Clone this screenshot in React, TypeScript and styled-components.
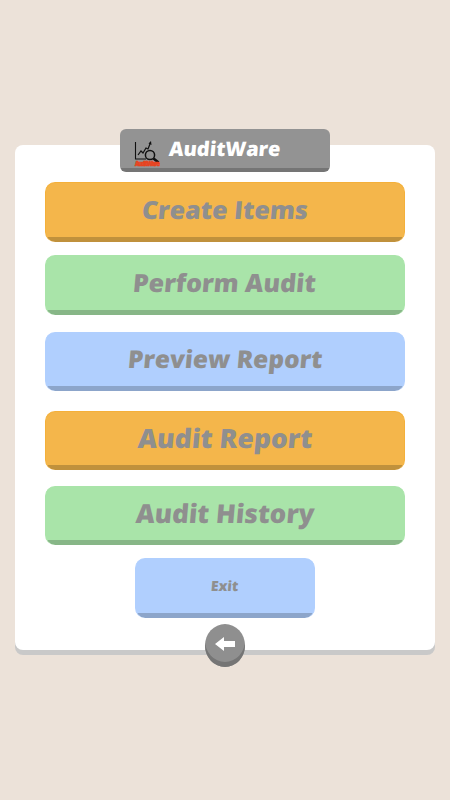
import styled, { createGlobalStyle } from "styled-components";

const GlobalStyle = createGlobalStyle`
  html, body {
    margin: 0;
    padding: 0;
    background: #ece2d9;
    font-family: "Open Sans", "Noto Sans", sans-serif;
  }
`;

const Page = styled.div`
  width: 450px;
  height: 800px;
  box-sizing: border-box;
  padding: 145px 15px 0;
  overflow: hidden;
`;

const Card = styled.div`
  position: relative;
  box-sizing: border-box;
  height: 505px;
  padding: 37px 30px 0;
  display: flex;
  flex-direction: column;
  align-items: center;
  background: white;
  border-radius: 8px;
  box-shadow: 0 5px 0 #c9c9c9;
`;

const Header = styled.div`
  position: absolute;
  top: -16px;
  left: 105px;
  box-sizing: border-box;
  width: 210px;
  height: 43px;
  padding-left: 14px;
  display: flex;
  align-items: flex-start;
  gap: 9px;
  background: linear-gradient(to top, #757575 4px, #939393 4px);
  border-radius: 6px;
`;

const LogoMark = styled.svg`
  flex: none;
  margin-top: 11px;
`;

const Title = styled.div`
  margin-top: 5px;
  color: white;
  font-size: 20px;
  font-weight: 800;
  line-height: 30px;
  transform: skewX(-5deg);
`;

const MenuButton = styled.button<{ $bg: string; $edge: string; $line: string; $top: number; $h: number; $w?: number; $size: number }>`
  flex: none;
  box-sizing: border-box;
  width: ${(p) => p.$w ?? 360}px;
  height: ${(p) => p.$h}px;
  margin-top: ${(p) => p.$top}px;
  padding: 0 0 7px;
  border: 1px solid ${(p) => p.$line};
  border-bottom: none;
  border-radius: 10px;
  background: linear-gradient(to top, ${(p) => p.$edge} 5px, ${(p) => p.$bg} 5px);
  color: #8f8f8f;
  font-family: "Open Sans", "Noto Sans", sans-serif;
  font-size: ${(p) => p.$size}px;
  font-weight: 800;
`;

const ButtonLabel = styled.span`
  display: inline-block;
  transform: skewX(-5deg);
`;

const BackButton = styled.button`
  position: absolute;
  left: 190px;
  top: 479px;
  width: 40px;
  height: 43px;
  padding: 0 0 4px;
  display: flex;
  align-items: center;
  justify-content: center;
  border: none;
  border-radius: 50%;
  background: #8f8f8f;
  box-shadow: inset 0 -5px 0 #757575;
`;

const orange = { $bg: "#f4b64b", $edge: "#c0913c", $line: "#f4b03a" };
const green = { $bg: "#a9e4a9", $edge: "#87b687", $line: "#a9e4a9" };
const blue = { $bg: "#b0cffe", $edge: "#8ca5ca", $line: "#b0cffe" };

function Logo() {
  return (
    <LogoMark width="26" height="27" viewBox="0 0 26 27" fill="none">
      <path d="M1.5 2V19H12" stroke="#111" strokeWidth="1.1" />
      <path d="M4 15L7 11L9 13L12 8L14 9L16 4" stroke="#111" strokeWidth="1.2" />
      <path d="M14.5 3.5L17 1L17.5 5Z" fill="#111" />
      <circle cx="16" cy="15" r="4.6" stroke="#111" strokeWidth="1.5" />
      <path d="M19.5 18.5L24.5 22.5" stroke="#111" strokeWidth="2.6" />
      <text x="1" y="26" fontFamily="Open Sans" fontSize="6" fontWeight="800" fill="#e8431f" stroke="#e8431f" strokeWidth="0.6" textLength="25">
        AuditWare
      </text>
    </LogoMark>
  );
}

export default function App() {
  return (
    <Page>
      <GlobalStyle />
      <Card>
        <Header>
          <Logo />
          <Title>AuditWare</Title>
        </Header>
        <MenuButton {...orange} $top={0} $h={60} $size={25}><ButtonLabel>Create Items</ButtonLabel></MenuButton>
        <MenuButton {...green} $top={13} $h={60} $size={25}><ButtonLabel>Perform Audit</ButtonLabel></MenuButton>
        <MenuButton {...blue} $top={17} $h={59} $size={24.5}><ButtonLabel>Preview Report</ButtonLabel></MenuButton>
        <MenuButton {...orange} $top={20} $h={59} $size={26.5}><ButtonLabel>Audit Report</ButtonLabel></MenuButton>
        <MenuButton {...green} $top={16} $h={59} $size={26}><ButtonLabel>Audit History</ButtonLabel></MenuButton>
        <MenuButton {...blue} $top={13} $h={60} $w={180} $size={14}><ButtonLabel>Exit</ButtonLabel></MenuButton>
        <BackButton aria-label="Back">
          <svg width="20" height="14" viewBox="0 0 20 14">
            <path d="M0 7L9 0V4H20V10H9V14Z" fill="white" />
          </svg>
        </BackButton>
      </Card>
    </Page>
  );
}
